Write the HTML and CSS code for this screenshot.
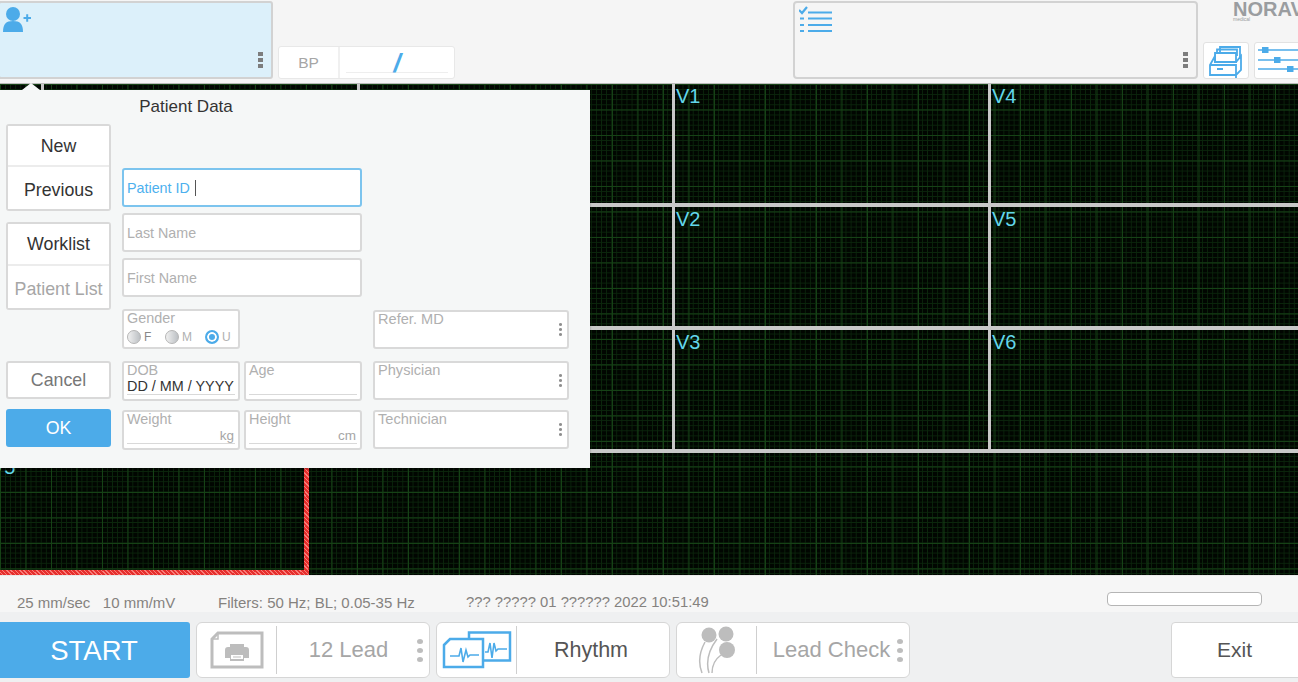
FILE: index.html
```html
<!DOCTYPE html>
<html lang="en">
<head>
  <meta charset="UTF-8">
  <title>ECG Acquisition</title>
  <link rel="stylesheet" href="styles.css">
</head>
<body>

  <!-- Top bar -->
  <header class="top-bar">
    <div class="patient-card">
      <svg class="card-icon" width="34" height="32" viewBox="0 0 34 32"><circle cx="13" cy="11" r="7" fill="#4cabe9"/><path d="M3 29c0-8 3-11 10-11s10 3 10 11z" fill="#4cabe9"/><path d="M23.500 15h7.500M27.200 11.200v7.500" stroke="#4cabe9" stroke-width="2"/></svg>
      <span class="kebab"><i></i><i></i><i></i></span>
    </div>
    <div class="bp-card">
      <span class="bp-label">BP</span>
      <span class="bp-value">/</span>
    </div>
    <div class="task-card">
      <svg class="card-icon" width="36" height="30" viewBox="0 0 36 30"><path d="M0 5l3 3 5-6" fill="none" stroke="#4cabe9" stroke-width="2.200"/><path d="M9 7.500h24M9 13.500h24M9 20h24M9 26h24M1 13.500h4M1 20h4M1 26h4" stroke="#4cabe9" stroke-width="2"/></svg>
      <span class="kebab"><i></i><i></i><i></i></span>
    </div>
    <div class="top-right">
      <div class="logo">NORAV<small>medical</small></div>
      <div class="tool-row">
        <button class="tool-btn">
          <svg width="36" height="34" viewBox="0 0 36 34" fill="none" stroke="#4cabe9" stroke-width="1.800"><path d="M12 8V3h20v12"/><path d="M9 9V5.500h20V12"/><path d="M7 9h21v9H7z" fill="#fff"/><path d="M2 21l5-9v6h21l5-6v14l-5 5H2zM2 21h26v13"/><path d="M9 25h6" stroke-width="2"/></svg>
        </button>
        <button class="tool-btn tool-btn-wide">
          <svg width="44" height="34" viewBox="0 0 44 34" fill="#4cabe9"><path d="M0 7h44M0 17h44M0 26h44" stroke="#4cabe9" stroke-width="1.400"/><rect x="4" y="4" width="6.500" height="6"/><rect x="16" y="14" width="6.500" height="6"/><rect x="29" y="23" width="6.500" height="6"/></svg>
        </button>
      </div>
    </div>
  </header>

  <!-- Traces -->
  <main class="ecg">
    <div class="lead"></div>
    <div class="lead"></div>
    <div class="lead"></div>
    <div class="lead"><span class="lead-name">V1</span></div>
    <div class="lead"><span class="lead-name">V4</span></div>
    <div class="lead"></div>
    <div class="lead"></div>
    <div class="lead"></div>
    <div class="lead"><span class="lead-name">V2</span></div>
    <div class="lead"><span class="lead-name">V5</span></div>
    <div class="lead"></div>
    <div class="lead"></div>
    <div class="lead"></div>
    <div class="lead"><span class="lead-name">V3</span></div>
    <div class="lead"><span class="lead-name">V6</span></div>
    <div class="rhythm-row">
      <div class="rhythm-selected"><span class="lead-name rhythm-name">V5</span></div>
    </div>
  </main>

  <!-- Status line -->
  <div class="status-bar">
    <span class="status-speed">25 mm/sec&nbsp;&nbsp; 10 mm/mV</span>
    <span class="status-filters">Filters: 50 Hz; BL; 0.05-35 Hz</span>
    <span class="status-date">??? ????? 01 ?????? 2022 10:51:49</span>
    <span class="status-progress"></span>
  </div>

  <!-- Bottom buttons -->
  <footer class="bottom-bar">
    <button class="start-btn">START</button>
    <div class="action-btn">
      <span class="action-icon">
        <svg width="54" height="38" viewBox="0 0 54 38"><path d="M8 2h44v34H2V8z" fill="none" stroke="#bdbdbd" stroke-width="3"/><path d="M2 8h6V2" fill="none" stroke="#bdbdbd" stroke-width="1.500"/><path d="M20 13h14v5H20z" fill="#bdbdbd"/><path d="M18 16h18a3 3 0 0 1 3 3v8h-5v3H20v-3h-5v-8a3 3 0 0 1 3-3z" fill="#bdbdbd"/><path d="M21 24h12v4H21z" fill="#fff"/><path d="M23 26h8" stroke="#bdbdbd"/></svg>
      </span>
      <span class="action-label is-dim label-twelve">12 Lead</span>
      <span class="kebab kebab-big"><i></i><i></i><i></i></span>
    </div>
    <div class="action-btn">
      <span class="action-icon">
        <svg width="70" height="38" viewBox="0 0 70 38" fill="none" stroke="#4cabe9" stroke-width="2.500"><path d="M27 9V1.500h41v28H42"/><path d="M43 21h3l2-9 2 15 2-15 2 8 2-2h9" stroke-width="1.600"/><path d="M2 14l6-6h33v28H2z" fill="#fff"/><path d="M8 25h9l2-8 2 14 3-12 2 7 2-2h9" stroke-width="1.600"/></svg>
      </span>
      <span class="action-label label-rhythm">Rhythm</span>
    </div>
    <div class="action-btn">
      <span class="action-icon">
        <svg width="40" height="50" viewBox="0 0 40 50" fill="#bdbdbd"><circle cx="12" cy="10" r="7.500"/><circle cx="29" cy="9" r="7.500"/><circle cx="30" cy="25" r="8"/><path d="M8 17C2 28 1 38 5 48M20 14C11 26 9 38 12 48M24 30C17 35 15 42 15 48" fill="none" stroke="#bdbdbd" stroke-width="1.500"/></svg>
      </span>
      <span class="action-label is-dim label-lead">Lead Check</span>
      <span class="kebab kebab-big"><i></i><i></i><i></i></span>
    </div>
    <button class="exit-btn">Exit</button>
  </footer>

  <!-- Patient Data dialog -->
  <section class="dialog">
    <span class="dialog-arrow"></span>
    <h2 class="dialog-title">Patient Data</h2>
    <div class="dialog-body">
      <div class="side-col">
        <div class="btn-group">
          <button class="side-btn">New</button>
          <button class="side-btn">Previous</button>
        </div>
        <div class="btn-group group-worklist">
          <button class="side-btn">Worklist</button>
          <button class="side-btn is-dim">Patient List</button>
        </div>
        <button class="side-btn single cancel">Cancel</button>
        <button class="side-btn single ok">OK</button>
      </div>

      <div class="form-col">
        <div class="text-field is-active">Patient ID <span class="caret"></span></div>
        <div class="text-field">Last Name</div>
        <div class="text-field">First Name</div>
        <div class="field-row row-gender">
          <div class="mini-field gender">
            <span class="mini-label">Gender</span>
            <div class="radios">
              <span class="radio"></span><span class="radio-text is-f">F</span>
              <span class="radio"></span><span class="radio-text">M</span>
              <span class="radio is-on"></span><span class="radio-text is-u">U</span>
            </div>
          </div>
        </div>
        <div class="field-row row-dob">
          <div class="mini-field">
            <span class="mini-label">DOB</span>
            <span class="mini-value">DD / MM / YYYY</span>
          </div>
          <div class="mini-field">
            <span class="mini-label">Age</span>
            <span class="mini-value"></span>
          </div>
        </div>
        <div class="field-row row-size">
          <div class="mini-field">
            <span class="mini-label">Weight</span>
            <span class="mini-value mini-unit">kg</span>
          </div>
          <div class="mini-field">
            <span class="mini-label">Height</span>
            <span class="mini-value mini-unit">cm</span>
          </div>
        </div>
      </div>

      <div class="staff-col">
        <div class="staff-field">Refer. MD<span class="kebab kebab-small"><i></i><i></i><i></i></span></div>
        <div class="staff-field">Physician<span class="kebab kebab-small"><i></i><i></i><i></i></span></div>
        <div class="staff-field">Technician<span class="kebab kebab-small"><i></i><i></i><i></i></span></div>
      </div>
    </div>
  </section>

</body>
</html>
```

FILE: styles.css
```css
* {
  box-sizing: border-box;
}

body {
  margin: 0;
  width: 1298px;
  height: 682px;
  overflow: hidden;
  position: relative;
  background: #f5f5f5;
  font-family: "Liberation Sans", Arial, sans-serif;
  color: #333;
}

button {
  font-family: inherit;
  cursor: pointer;
}

.is-dim {
  color: #a6a6a6;
}

/* Kebab dots */
.kebab {
  position: absolute;
  right: 8px;
  bottom: 9px;
  display: flex;
  flex-direction: column;
  gap: 2px;
}

.kebab i {
  width: 5px;
  height: 4px;
  background: #7d7d7d;
}

.kebab-big {
  position: static;
  gap: 4px;
  margin-right: 6px;
}

.kebab-big i {
  width: 6px;
  height: 5px;
  border-radius: 50%;
  background: #bdbdbd;
}

.kebab-small {
  right: 5px;
  bottom: 11px;
  gap: 2px;
}

.kebab-small i {
  width: 3.500px;
  height: 3px;
  border-radius: 50%;
  background: #8f8f8f;
}

/* Top bar */
.top-bar {
  height: 83px;
  display: flex;
  overflow: hidden;
}

.patient-card {
  position: relative;
  flex: none;
  width: 275px;
  height: 78px;
  margin: 1px 0 0 -2px;
  background: #dcf0fa;
  border: 2px solid #d2d2d2;
  border-radius: 3px;
}

.card-icon {
  display: block;
}

.bp-card {
  flex: none;
  display: flex;
  width: 177px;
  height: 33px;
  margin: 46px 0 0 5px;
  background: #fff;
  border: 1px solid #e8e8e8;
  border-radius: 3px;
}

.bp-label {
  width: 61px;
  padding-top: 7px;
  text-align: center;
  font-size: 15.500px;
  color: #a6a6a6;
  border-right: 2px solid #f0f0f0;
}

.bp-value {
  flex: 1;
  margin: 0 6px 5px;
  border-bottom: 1px solid #eee;
  text-align: center;
  font-size: 26px;
  line-height: 32px;
  font-style: italic;
  font-weight: bold;
  color: #4cabe9;
}

.task-card {
  position: relative;
  flex: none;
  width: 405px;
  height: 78px;
  margin: 1px 0 0 338px;
  background: #f5f5f5;
  border: 2px solid #d2d2d2;
  border-radius: 4px;
}

.task-card .card-icon {
  margin: 2px 0 0 4px;
}

.top-right {
  flex: none;
  width: 100px;
  margin-left: 5px;
}

.logo {
  height: 21px;
  margin: 0 0 0 30px;
  padding-top: 1px;
  font-size: 20px;
  line-height: 16px;
  font-weight: bold;
  color: #9a9da0;
  white-space: nowrap;
}

.logo small {
  display: block;
  font-size: 5px;
  line-height: 4px;
  font-weight: normal;
}

.tool-row {
  display: flex;
  gap: 5px;
  margin-top: 21px;
}

.tool-btn {
  flex: none;
  width: 46px;
  height: 37px;
  padding: 1px 0 0;
  display: flex;
  align-items: center;
  justify-content: center;
  background: #fff;
  border: 1px solid #e2e2e2;
  border-radius: 3px;
}

.tool-btn-wide {
  width: 60px;
  justify-content: flex-start;
  align-items: flex-start;
  padding: 0 0 0 3px;
}

/* ECG area */
.ecg {
  height: 492px;
  display: grid;
  grid-template-columns: 41px 316px 315px 316px 316px;
  grid-template-rows: 123px 123px 123px 122px;
  background-color: #010601;
  background-image:
    linear-gradient(to right, #164216 1px, transparent 1px),
    linear-gradient(to bottom, #164216 1px, transparent 1px),
    linear-gradient(to right, #0b260c 1px, transparent 1px),
    linear-gradient(to bottom, #0b260c 1px, transparent 1px);
  background-size: 25.500px 25.500px, 25.500px 25.500px, 5.100px 5.100px, 5.100px 5.100px;
  overflow: hidden;
  border-top: 1px solid #bbb;
}

.lead {
  border-left: 3px solid #c8c8c8;
  border-bottom: 4px solid #c8c8c8;
  padding-left: 1px;
}

.lead:first-child,
.lead:nth-child(6),
.lead:nth-child(11) {
  border-left: 0;
}

.lead-name {
  display: block;
  margin-top: 1px;
  font-size: 20px;
  line-height: 22px;
  color: #63d7ea;
}

.rhythm-row {
  grid-column: 1 / -1;
  display: flex;
}

.rhythm-selected {
  width: 309px;
  height: 122px;
  border: 5px solid #e62e2c;
  border-image: repeating-linear-gradient(45deg, #e62e2c 0 2px, #f77b78 2px 3px) 5;
  border-left: 0;
  border-top: 0;
}

.rhythm-name {
  margin: 3px 0 0 -9px;
}

/* Status line */
.status-bar {
  height: 37px;
  display: flex;
  align-items: flex-end;
  padding: 0 36px 1px 17px;
  font-size: 15px;
  line-height: 17px;
  color: #85827f;
  background: #f6f6f6;
  border-top: 1px solid #e9e9e9;
}

.status-speed {
  width: 201px;
}

.status-filters {
  width: 248px;
}

.status-date {
  font-size: 14.800px;
}

.status-progress {
  margin-left: auto;
  width: 155px;
  height: 14px;
  margin-bottom: 5px;
  background: #fff;
  border: 1px solid #b5b5b5;
  border-radius: 4px;
}

/* Bottom buttons */
.bottom-bar {
  height: 70px;
  display: flex;
  gap: 6px;
  padding-top: 10px;
  background: #eff0f1;
}

.start-btn {
  flex: none;
  width: 190px;
  height: 56px;
  padding: 2px 2px 0 0;
  background: #4cabe9;
  color: #fff;
  border: 0;
  border-radius: 0 3px 3px 0;
  font-size: 27.500px;
}

.action-btn {
  flex: none;
  width: 234px;
  height: 56px;
  display: flex;
  align-items: center;
  background: #fff;
  border: 1px solid #d6d6d6;
  border-radius: 6px;
}

.action-icon {
  flex: none;
  width: 80px;
  height: 48px;
  display: flex;
  align-items: center;
  justify-content: center;
  border-right: 1px solid #cfcfcf;
}

.action-label {
  flex: 1;
  text-align: center;
  font-size: 21.500px;
  color: #555;
}

.action-label.is-dim {
  font-size: 22px;
  color: #a6a6a6;
}

.label-twelve {
  padding-left: 3px;
}

.label-rhythm {
  padding-right: 4px;
}

.label-lead {
  padding-left: 9px;
  white-space: nowrap;
}

.exit-btn {
  flex: none;
  width: 140px;
  height: 56px;
  margin-left: auto;
  margin-right: -13px;
  padding: 0 13px 0 0;
  background: #fff;
  border: 1px solid #d6d6d6;
  border-radius: 4px;
  font-size: 21px;
  color: #555;
}

/* Patient Data dialog */
.dialog {
  position: absolute;
  left: 0;
  top: 90px;
  width: 590px;
  height: 378px;
  background: #f5f7f7;
  box-shadow: 0 1px 2px rgba(0, 0, 0, 0.3);
}

.dialog-arrow {
  position: absolute;
  left: 22px;
  top: -7px;
  border-left: 9px solid transparent;
  border-right: 9px solid transparent;
  border-bottom: 7px solid #f5f7f7;
}

.dialog-title {
  margin: 0;
  width: 372px;
  height: 34px;
  padding-top: 7px;
  text-align: center;
  font-size: 17px;
  line-height: 19px;
  font-weight: normal;
  color: #333;
}

.dialog-body {
  display: flex;
  padding-left: 6px;
}

.side-col {
  flex: none;
  width: 105px;
  display: flex;
  flex-direction: column;
}

.btn-group {
  height: 87px;
  display: flex;
  flex-direction: column;
  background: #fff;
  border: 2px solid #d9d9d9;
  border-radius: 3px;
}

.group-worklist {
  height: 88px;
  margin-top: 11px;
}

.side-btn {
  flex: 1;
  padding: 2px 0 0;
  background: #fff;
  border: 0;
  font-size: 17.800px;
  color: #333;
}

.side-btn + .side-btn {
  padding-top: 5px;
  border-top: 2px solid #ececec;
}

.side-btn.is-dim {
  color: #a6a6a6;
}

.side-btn.single {
  flex: none;
  height: 38px;
  border: 2px solid #d9d9d9;
  border-radius: 3px;
  padding-top: 1px;
}

.side-btn.cancel {
  margin-top: 51px;
  color: #777;
}

.side-btn.ok {
  margin-top: 10px;
  background: #4cabe9;
  border-color: #4cabe9;
  color: #fff;
}

.form-col {
  flex: none;
  width: 240px;
  margin: 44px 0 0 11px;
  display: flex;
  flex-direction: column;
}

.text-field {
  height: 39px;
  margin-bottom: 6px;
  padding: 0 3px;
  display: flex;
  align-items: center;
  font-size: 14.300px;
  color: #b0b0b0;
  background: #fff;
  border: 2px solid #d9d9d9;
  border-radius: 3px;
}

.text-field.is-active {
  color: #4cb0ee;
  border-color: #7cc4ee;
}

.caret {
  display: inline-block;
  width: 1px;
  height: 16px;
  margin-left: 5px;
  background: #555;
}

.field-row {
  display: flex;
  gap: 4px;
}

.row-gender {
  margin-top: 6px;
}

.row-dob {
  margin-top: 12px;
}

.row-size {
  margin-top: 9px;
}

.mini-field {
  flex: none;
  width: 118px;
  height: 40px;
  display: flex;
  flex-direction: column;
  padding: 0 3px;
  background: #fff;
  border: 2px solid #d9d9d9;
  border-radius: 3px;
}

.mini-label {
  font-size: 14.400px;
  line-height: 15px;
  color: #b0b0b0;
}

.mini-value {
  height: 17px;
  font-size: 14.400px;
  line-height: 16px;
  color: #333;
  white-space: nowrap;
  border-bottom: 1px solid #d9d9d9;
}

.mini-unit {
  text-align: right;
  font-size: 13.500px;
  line-height: 17px;
  padding-right: 1px;
  color: #a6a6a6;
}

.radios {
  display: flex;
  align-items: center;
  margin-top: 4px;
}

.radio {
  flex: none;
  width: 14px;
  height: 14px;
  border-radius: 50%;
  background: linear-gradient(to right, #f0f0f0, #bcc0c4);
  border: 1px solid #b5b5b5;
}

.radio.is-on {
  border: 2px solid #4cabe9;
  background: #4cabe9;
  box-shadow: inset 0 0 0 2px #fff;
}

.radio-text {
  width: 26px;
  padding-left: 3px;
  font-size: 12px;
  color: #b0b0b0;
}

.radio-text.is-f {
  width: 24px;
  color: #888;
}

.radio-text.is-u {
  width: 14px;
}

.staff-col {
  flex: none;
  width: 196px;
  margin: 186px 0 0 11px;
}

.staff-field {
  position: relative;
  height: 39px;
  margin-bottom: 12px;
  padding: 0 3px;
  font-size: 14.600px;
  line-height: 15px;
  color: #b0b0b0;
  background: #fff;
  border: 2px solid #d9d9d9;
  border-radius: 3px;
}

.staff-field + .staff-field {
  margin-bottom: 10px;
}
```
